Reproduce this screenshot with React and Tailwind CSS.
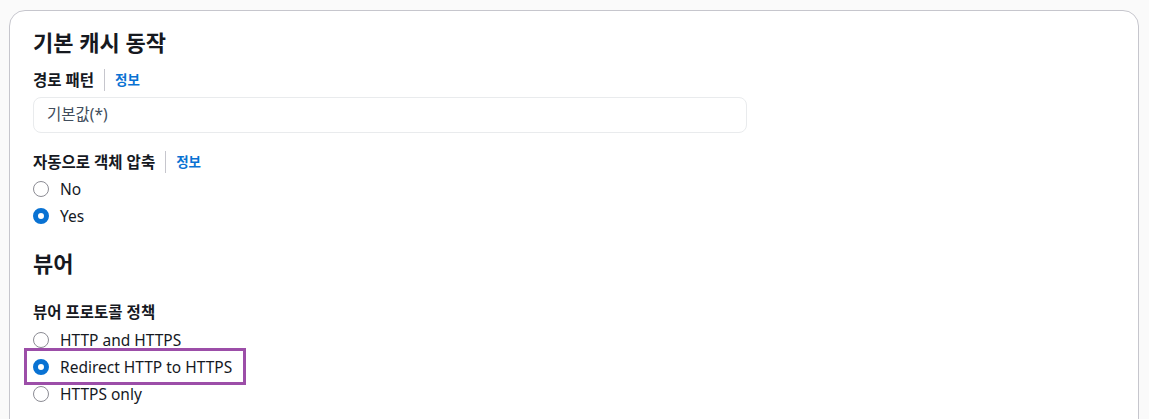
import React from "react";

const font = { fontFamily: '"Noto Sans", "Noto Sans CJK KR", sans-serif' };

function Radio({ checked, label, highlight }) {
  return (
    <div className="relative flex h-[27px] items-center">
      {highlight && (
        <span className="pointer-events-none absolute left-[-9px] top-[-5px] h-[37px] w-[222px] border-[3px] border-[#9c4ea8]" />
      )}
      <span
        className={
          checked
            ? "box-border h-4 w-4 shrink-0 rounded-full border-[5px] border-[#0972d3] bg-white"
            : "box-border h-4 w-4 shrink-0 rounded-full border-[1.5px] border-[#8c8c94] bg-white"
        }
      />
      <span className="ml-[11px] text-[15.5px] leading-5 text-[#16191f]">{label}</span>
    </div>
  );
}

function FieldLabel({ text }) {
  return (
    <div className="flex h-5 items-center">
      <span className="text-[15.5px] font-bold leading-5 text-[#16191f]">{text}</span>
      <span className="mx-[10px] h-[22px] w-px bg-[#c6c6cd]" />
      <span className="text-[13.5px] font-bold text-[#0972d3]">정보</span>
    </div>
  );
}

export default function App() {
  return (
    <div className="h-[419px] overflow-hidden bg-[#fafafa] pl-[9px] pr-[10px] pt-[10px]" style={font}>
      <div className="h-[440px] rounded-t-[16px] border border-[#c6c6cd] bg-white px-[23px] pt-[19px]">
        <h2 className="h-6 text-[22px] font-bold leading-6 text-[#16191f]">기본 캐시 동작</h2>

        <div className="mt-4">
          <FieldLabel text="경로 패턴" />
        </div>
        <div className="mt-[7px] flex h-[36px] w-[714px] items-center rounded-[8px] border border-[#e9ebed] px-[13px] text-[15.5px] text-[#414d5c]">
          기본값(*)
        </div>

        <div className="mt-[19px]">
          <FieldLabel text="자동으로 객체 압축" />
        </div>
        <div className="mt-[3px]">
          <Radio label="No" />
          <Radio checked label="Yes" />
        </div>

        <h2 className="mt-[22px] h-6 text-[22px] font-bold leading-6 text-[#16191f]">뷰어</h2>

        <div className="mt-[27px]">
          <div className="flex h-5 items-center text-[15.5px] font-bold leading-5 text-[#16191f]">뷰어 프로토콜 정책</div>
        </div>
        <div className="mt-[4px]">
          <Radio label="HTTP and HTTPS" />
          <Radio checked highlight label="Redirect HTTP to HTTPS" />
          <Radio label="HTTPS only" />
        </div>
      </div>
    </div>
  );
}
